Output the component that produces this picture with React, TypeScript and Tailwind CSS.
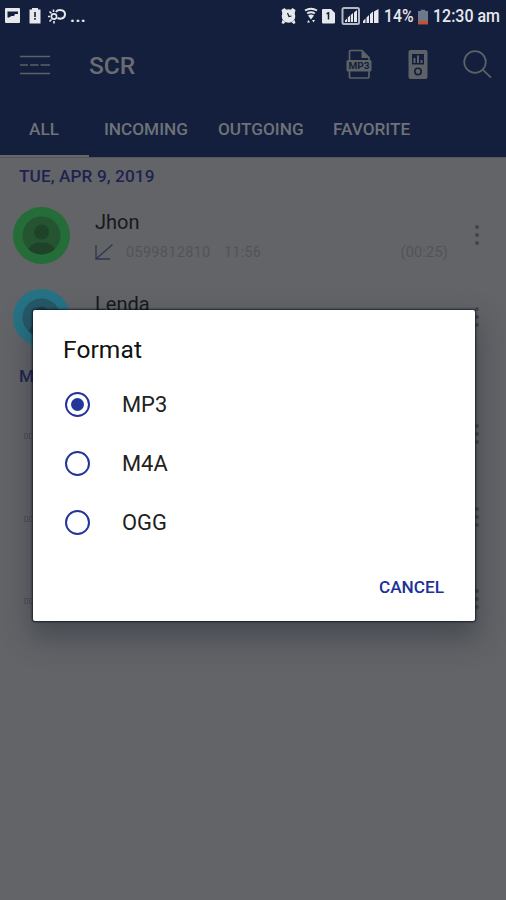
import clsx from "clsx";

const formats = ["MP3", "M4A", "OGG"];

const tabs = [
  { name: "ALL", className: "w-[89px] pl-[29px]" },
  { name: "INCOMING", className: "w-[114px] pl-[15px]" },
  { name: "OUTGOING", className: "w-[115px] pl-[15px]" },
  { name: "FAVORITE", className: "pl-[15px]" },
];

const StatusBar = () => (
  <div className="flex h-8 items-center text-[#e6e8ec]">
    <svg className="ml-[4px] h-4 w-[62px] shrink-0" viewBox="0 0 62 16" fill="currentColor">
      <path d="M2 0h13a1 1 0 0 1 1 1v13a1 1 0 0 1-1 1H2a1 1 0 0 1-1-1V1a1 1 0 0 1 1-1z" />
      <path d="M3.500 3.500H14V6h-3l-1 2H7.500L5 9.500H3.500z" fill="#131f3d" />
      <path d="M28 0h6v1.500h2.500V15.500H25.500V1.500H28z" />
      <path d="M30.200 4h1.600v5h-1.600zM30.200 10h1.600v1.800h-1.600z" fill="#131f3d" />
      <g fill="none" stroke="currentColor" strokeWidth="1.600">
        <circle cx="50" cy="8.500" r="2.600" />
        <path d="M45.500 3.500l2 2M49.500 1.500v2.500M44 8.500h2.300M45.500 13.500l2-2M50 15.500V13" />
        <path d="M52 4c2-3 9-2.500 9 2.200 0 4.300-4.500 5.300-7.500 3.800" strokeWidth="2" />
      </g>
    </svg>
    <span className="ml-[4px] text-[17px] leading-5 font-bold tracking-[0.5px]">...</span>
    <svg className="ml-auto h-[18px] w-[102px] shrink-0" viewBox="0 0 102 18" fill="currentColor">
      <circle cx="8.500" cy="9" r="6.800" />
      <path d="M1.500 3l3-2 2 2-4 4zM15.500 3l-3-2-2 2 4 4zM2.500 13l3 2-2 2-2-1zM14.500 13l-3 2 2 2 2-1z" />
      <path d="M7.500 6L9 9.500l2.500-.500" fill="none" stroke="#131f3d" strokeWidth="1.200" />
      <path d="M25 3.500q6-3.500 12 0M27.200 6.500q3.800-2.500 7.600 0" fill="none" stroke="currentColor" strokeWidth="2" />
      <path d="M28 8.500q3-2 6 0l-3 4zM27 15.500l1.500-2.500 1.500 2.500zM32 13h3l-1.500 2.500z" />
      <path d="M43 2h8l4 4v9.500a1 1 0 0 1-1 1H43a1 1 0 0 1-1-1V3a1 1 0 0 1 1-1z" />
      <path d="M46.500 6.800l2-.900V12.500" fill="none" stroke="#131f3d" strokeWidth="1.500" />
      <rect x="62.500" y="1" width="16.500" height="16" rx="1.500" fill="none" stroke="#b4b8c2" strokeWidth="2" />
      <path d="M65 15V13.500L67 11.500V15zM67.800 15V10.500L70 8.500V15zM70.800 15V8L73 6V15zM74 15V5.500L77 3V15z" />
      <path d="M83 16V14L85.500 11.500V16zM86.500 16V10.500L89 8V16zM90 16V7L93 4.500V16zM94 16V4.500L98.500 2V16z" />
    </svg>
    <div className="ml-[2px] w-[33px]">
      <span className="inline-block origin-left scale-x-[0.83] text-[19px] leading-7 font-medium whitespace-nowrap">14%</span>
    </div>
    <svg className="mt-px ml-[1px] h-4 w-[10px] shrink-0" viewBox="0 0 11 16">
      <path d="M3 0h5v1.500h3V16H0V1.500h3z" fill="#6e788b" />
      <path d="M0 12.500h11V16H0z" fill="#c8502f" />
    </svg>
    <div className="ml-[5px] w-[73px]">
      <span className="inline-block origin-left scale-x-[0.84] text-[19px] leading-7 font-medium whitespace-nowrap">12:30 am</span>
    </div>
  </div>
);

const Mp3Icon = () => (
  <svg className="h-[31px] w-[26px]" viewBox="0 0 26 31">
    <path d="M3.500 11V2.500a1 1 0 0 1 1-1H16l7 7V11M3.500 21v7a1 1 0 0 0 1 1h17.500a1 1 0 0 0 1-1v-7" fill="none" stroke="currentColor" strokeWidth="1.700" />
    <path d="M15.500 1.500l7.500 7.500h-7.500z" fill="currentColor" />
    <rect x="0.500" y="11" width="25" height="11.500" rx="1.500" fill="currentColor" />
    <text x="13" y="20.200" textAnchor="middle" fontSize="9.500" fontWeight="700" textLength="21" lengthAdjust="spacingAndGlyphs" fill="#131f3d">MP3</text>
  </svg>
);

const PlayerIcon = () => (
  <svg className="h-[31px] w-5" viewBox="0 0 20 31">
    <rect x="0.500" y="1" width="19" height="29" rx="2" fill="currentColor" />
    <path d="M4 5h12v10.500H4z" fill="#131f3d" />
    <path d="M5.500 9h2v5h-2zM9 6.500h2V14H9zM12.500 11h2v3h-2z" fill="currentColor" />
    <circle cx="10" cy="22.500" r="3.200" fill="none" stroke="#131f3d" strokeWidth="1.600" />
  </svg>
);

const Toolbar = () => (
  <div className="flex h-[65px] items-center text-[#5d6266]">
    <svg className="ml-5 h-5 w-[30px]" viewBox="0 0 30 20" stroke="currentColor" strokeWidth="1.700">
      <path d="M0 1.500h30M0 10h8M10 10h8.500M20.500 10H30M0 18.500h30" />
    </svg>
    <h1 className="ml-[39px] pt-[4px] text-[24.500px] font-medium tracking-[-0.1px] text-[#696d71]">SCR</h1>
    <div className="mr-[14px] ml-auto flex items-center">
      <Mp3Icon />
      <div className="ml-[36px]">
        <PlayerIcon />
      </div>
      <svg className="ml-[35px] h-[29px] w-[29px]" viewBox="0 0 29 29" fill="none" stroke="currentColor" strokeWidth="1.700">
        <circle cx="12" cy="12" r="10.800" />
        <path d="M19.700 19.700l8.300 8" />
      </svg>
    </div>
  </div>
);

const Tabs = () => (
  <div className="flex h-[60px] bg-[#131f3d] text-[17.200px] font-medium text-[#6f7276]">
    {tabs.map(({ name, className }, i) => (
      <div
        key={name}
        className={clsx(
          "flex items-center whitespace-nowrap",
          className,
          i === 0 ? "border-b-2 border-[#66676a] pt-[7px]" : "pt-[5px]"
        )}
      >
        {name}
      </div>
    ))}
  </div>
);

const Dots = () => (
  <div className="flex w-1 flex-col gap-1">
    <div className="size-1 rounded-full bg-[#42454a]" />
    <div className="size-1 rounded-full bg-[#42454a]" />
    <div className="size-1 rounded-full bg-[#42454a]" />
  </div>
);

const Avatar = ({ color, inner, person }: { color: string; inner: string; person: string }) => (
  <svg className="size-[57px] shrink-0" viewBox="0 0 57 57">
    <circle cx="28.500" cy="28.500" r="28.500" className={color} />
    <circle cx="28.500" cy="28.500" r="19" className={inner} />
    <circle cx="28.500" cy="25" r="7.500" className={person} />
    <path d="M15.500 42.300C18 37 22 35.500 28.500 35.500s10.500 1.500 13 6.800A19 19 0 0 1 15.500 42.300z" className={person} />
  </svg>
);

const Call = ({ name, avatar }: { name: string; avatar: React.ReactNode }) => (
  <div className="flex h-[82px] items-center pr-[27px] pl-[13px]">
    {avatar}
    <div className="ml-[25px] w-[353px] pt-[4px]">
      <div className="text-[20px] leading-[25px] text-[#16181b]">{name}</div>
      <div className="mt-[6px] flex h-6 items-center text-[14.500px] text-[#505458]">
        <svg className="-mt-[2px] h-4 w-[18px]" viewBox="0 0 18 16" fill="none" stroke="#303650" strokeWidth="1.300">
          <path d="M1 1v14h14M1 15L17.500 0.500" />
        </svg>
        <span className="ml-[13px] w-[98px] tracking-[0.3px]">0599812810</span>
        <span className="tracking-[0.2px]">11:56</span>
        <span className="ml-auto tracking-[0.2px]">(00:25)</span>
      </div>
    </div>
    <div className="ml-auto">
      <Dots />
    </div>
  </div>
);

const EmptyCall = () => (
  <div className="flex h-[82.500px] items-center pr-[27px] pl-[24px]">
    <div className="flex h-[7px] w-3 items-center gap-[1px] pt-1">
      <div className="h-[6px] w-1 rounded-[1px] border border-[#505056]" />
      <div className="h-[6px] w-[3px] border border-r-0 border-[#505056]" />
    </div>
    <div className="ml-auto">
      <Dots />
    </div>
  </div>
);

const FormatDialog = ({ selected }: { selected: string }) => (
  <div className="absolute top-[310px] left-[33px] h-[311px] w-[442px] rounded-[2px] bg-white shadow-[0_0_2px_1px_rgba(10,15,25,0.75),0_14px_28px_4px_rgba(30,40,50,0.4)]">
    <h2 className="pt-[22px] pl-[30px] text-[24.500px] leading-9 font-normal tracking-[0.1px] text-[#111]">Format</h2>
    <div className="flex flex-col pt-[7px] pl-[32px]">
      {formats.map((format) => (
        <label key={format} className="flex h-[59px] items-center text-[21.900px] text-[#222]">
          <span className="flex size-[25px] items-center justify-center rounded-full border-2 border-[#22349a]">
            {format === selected && <span className="size-[13px] rounded-full bg-[#21389a]" />}
          </span>
          <span className="ml-8 pt-[1px]">{format}</span>
        </label>
      ))}
    </div>
    <div className="flex justify-end pt-[23px] pr-[31px]">
      <button className="text-[17.200px] leading-6 font-medium text-[#20309a]">CANCEL</button>
    </div>
  </div>
);

export default function App() {
  return (
    <div className="relative h-[900px] w-[506px] overflow-hidden bg-[#636468] font-['Roboto',sans-serif]">
      <header className="bg-[#131f3d]">
        <StatusBar />
        <Toolbar />
        <Tabs />
      </header>
      <main>
        <div className="flex h-[37px] items-center border-t border-[#54565e] pt-[2px] pl-[19px] text-[17.200px] font-medium text-[#1c2350]">
          <span className="tracking-[0.1px]">TUE, APR 9, 2019</span>
        </div>
        <Call
          name="Jhon"
          avatar={<Avatar color="fill-[#246c38]" inner="fill-[#245430]" person="fill-[#1f4329]" />}
        />
        <Call
          name="Lenda"
          avatar={<Avatar color="fill-[#267386]" inner="fill-[#255868]" person="fill-[#1c4351]" />}
        />
        <div className="flex h-[35px] items-center pt-[2px] pl-[19px] text-[17.200px] font-medium whitespace-nowrap text-[#1c2350]">
          MON, APR 8, 2019
        </div>
        <EmptyCall />
        <EmptyCall />
        <EmptyCall />
      </main>
      <FormatDialog selected="MP3" />
    </div>
  );
}
